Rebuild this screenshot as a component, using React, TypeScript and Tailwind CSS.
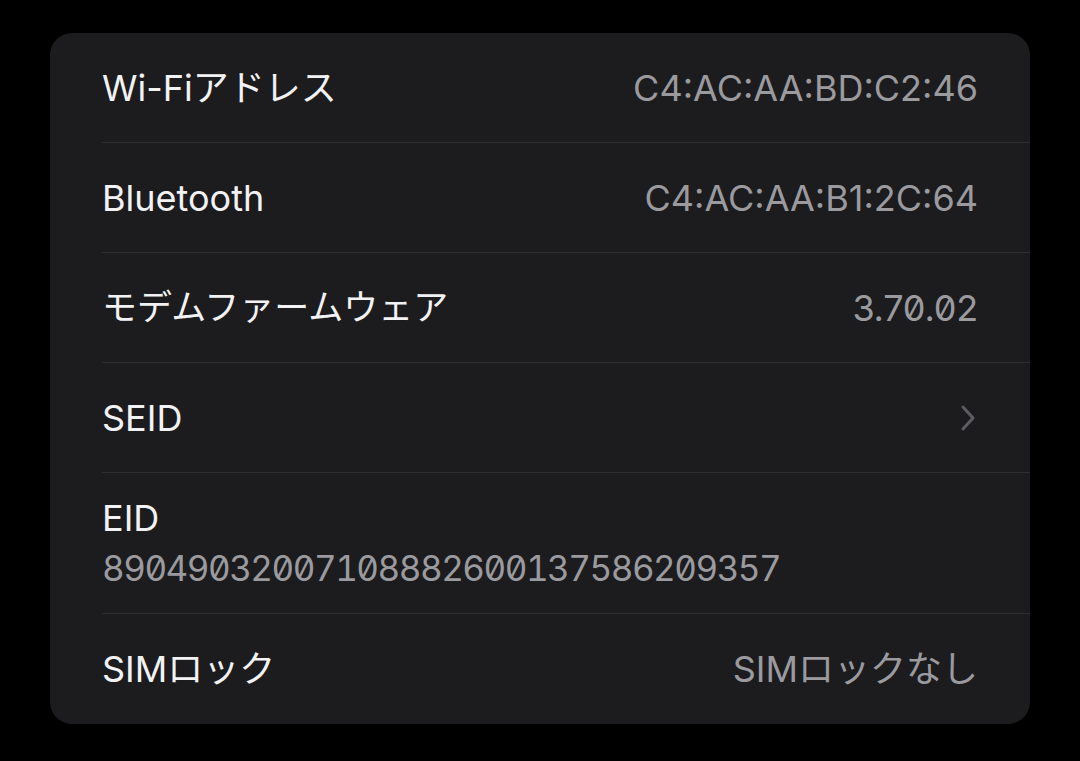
import React from "react";

type Row = {
  label: string;
  value?: string;
  mono?: boolean;
  chevron?: boolean;
  small?: boolean;
};

const rows: Row[] = [
  { label: "Wi-Fiアドレス", value: "C4:AC:AA:BD:C2:46" },
  { label: "Bluetooth", value: "C4:AC:AA:B1:2C:64" },
  { label: "モデムファームウェア", value: "3.70.02", mono: true, small: true },
  { label: "SEID", chevron: true },
];

const font = "font-['Inter','Noto_Sans_CJK_JP',sans-serif]";

const Chevron = () => (
  <svg width="18" height="28" viewBox="0 0 18 28" fill="none">
    <polyline
      points="4,3 14,14 4,25"
      stroke="#5c5c61"
      strokeWidth="3"
      strokeLinecap="round"
      strokeLinejoin="round"
    />
  </svg>
);

const App = () => {
  return (
    <div className={`w-[1080px] h-[761px] bg-black pt-[33px] px-[50px] ${font}`}>
      <div className="bg-[#1c1c1e] rounded-[22px] pl-[52px] overflow-hidden">
        {rows.map((row) => (
          <div
            key={row.label}
            className="h-[110px] flex items-center justify-between pr-[52px] border-b border-[#2e2e30]"
          >
            <p className={`${row.small ? "text-[35px]" : "text-[36px]"} text-[#f2f2f4]`}>
              {row.label}
            </p>
            {row.value && (
              <p
                className={`text-[36px] text-[#9a9a9f] ${
                  row.mono ? "slashed-zero tracking-[-0.2px]" : ""
                }`}
              >
                {row.value}
              </p>
            )}
            {row.chevron && (
              <div className="pr-[1px]">
                <Chevron />
              </div>
            )}
          </div>
        ))}

        {/* EID: label with the long number underneath */}
        <div className="h-[141px] flex flex-col justify-center gap-[6px] border-b border-[#2e2e30]">
          <p className="text-[36px] text-[#f2f2f4] leading-[44px]">EID</p>
          <p className="text-[35px] text-[#9a9a9f] leading-[44px] slashed-zero tabular-nums tracking-[-1.5px]">
            89049032007108882600137586209357
          </p>
        </div>

        <div className="h-[110px] flex items-center justify-between pr-[52px]">
          <p className="text-[36px] text-[#f2f2f4]">SIMロック</p>
          <p className="text-[36px] text-[#9a9a9f]">SIMロックなし</p>
        </div>
      </div>
    </div>
  );
};

export default App;
